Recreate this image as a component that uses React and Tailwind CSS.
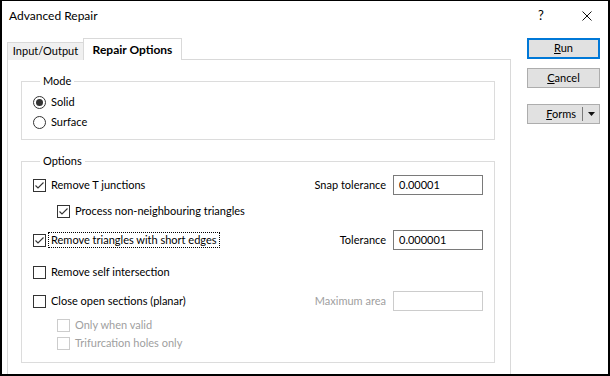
import React from 'react';

const Check = ({ checked, disabled }) => (
    <span
        className={`flex h-[13px] w-[13px] shrink-0 items-center justify-center border bg-white ${
            disabled ? 'border-[#cccccc]' : 'border-[#333333]'
        }`}
    >
        {checked && (
            <svg width="11" height="11" viewBox="0 0 11 11">
                <path d="M1.5 5.5 L4 8 L9.5 2.5" fill="none" stroke="#333333" strokeWidth="1.1" />
            </svg>
        )}
    </span>
);

const Radio = ({ checked, label }) => (
    <div className="flex h-[20px] items-center">
        <span className="flex h-[13px] w-[13px] shrink-0 items-center justify-center rounded-full border border-[#333333] bg-white">
            {checked && <span className="h-[7px] w-[7px] rounded-full bg-[#333333]" />}
        </span>
        <span className="ml-[2px] border border-transparent px-[2px] leading-[14px]">{label}</span>
    </div>
);

const CheckRow = ({ checked, disabled, focused, label, className = '' }) => (
    <div className={`flex items-center ${className}`}>
        <Check checked={checked} disabled={disabled} />
        <span
            className={`ml-[2px] border px-[2px] leading-[14px] ${
                focused ? 'border-dotted border-black' : 'border-transparent'
            } ${disabled ? 'text-[#a0a0a0]' : ''}`}
        >
            {label}
        </span>
    </div>
);

const Field = ({ label, value, disabled }) => (
    <div className="flex items-center">
        <span className={`mr-[7px] ${disabled ? 'text-[#a0a0a0]' : ''}`}>{label}</span>
        <div
            className={`flex h-[20px] w-[90px] items-center border pl-[5px] ${
                disabled ? 'border-[#cccccc]' : 'border-[#7a7a7a]'
            }`}
        >
            {value}
        </div>
    </div>
);

const Group = ({ title, className = '', children }) => (
    <div className={`flex flex-col border border-[#dcdcdc] ${className}`}>
        <span className="-mt-[9px] ml-[7px] w-fit bg-white px-[3px] leading-[16px]">{title}</span>
        {children}
    </div>
);

const Button = ({ children, primary, className = '' }) => (
    <div
        className={`flex w-[73px] items-center justify-center bg-[#e1e1e1] ${
            primary ? 'border-2 border-[#0078d7]' : 'border border-[#adadad]'
        } ${className}`}
    >
        {children}
    </div>
);

export default function App() {
    return (
        <div
            className="flex h-[376px] w-[610px] flex-col overflow-hidden border-t border-r-2 border-b-2 border-l-2 border-black bg-white text-[11px] text-black"
            style={{ fontFamily: 'Lato, "Liberation Sans", sans-serif' }}
        >
            {/* title bar */}
            <div className="flex h-[30px] shrink-0 items-center pl-[7px] text-[12px]">
                <span>Advanced Repair</span>
                <div className="flex-1" />
                <span className="w-[14px] text-center text-[13px]">?</span>
                <svg className="ml-[34px] mr-[16px]" width="10" height="10" viewBox="0 0 10 10">
                    <path d="M0.5 0.5 L9.5 9.5 M9.5 0.5 L0.5 9.5" stroke="#111" strokeWidth="1" />
                </svg>
            </div>

            <div className="mt-[7px] flex flex-1">
                {/* tabs + page */}
                <div className="ml-[5px] flex w-[504px] flex-col">
                    <div className="relative z-10 -mb-px flex h-[22px] items-end">
                        <div className="flex h-[18px] w-[76px] items-center justify-center border-t border-l border-[#d9d9d9] bg-[#f0f0f0]">
                            Input/Output
                        </div>
                        <div className="flex h-[22px] w-[99px] items-center justify-center border-t border-r border-l border-[#d9d9d9] bg-white text-[12px] font-bold">
                            Repair Options
                        </div>
                    </div>
                    <div className="flex flex-1 flex-col border-t border-r border-l border-[#d9d9d9] pt-[21px] pr-[15px] pl-[13px]">
                        <Group title="Mode" className="pl-[11px] pb-[7px]">
                            <div className="mt-[3px]">
                                <Radio checked label="Solid" />
                                <Radio label="Surface" />
                            </div>
                        </Group>

                        <Group title="Options" className="mt-[21px] pr-[11px] pb-[10px] pl-[11px]">
                            <div className="mt-[6px] flex h-[20px] items-center justify-between">
                                <CheckRow checked label="Remove T junctions" />
                                <Field label="Snap tolerance" value="0.00001" />
                            </div>
                            <CheckRow checked label="Process non-neighbouring triangles" className="mt-[6px] ml-[24px] h-[20px]" />
                            <div className="mt-[9px] flex h-[20px] items-center justify-between">
                                <CheckRow checked focused label="Remove triangles with short edges" />
                                <Field label="Tolerance" value="0.000001" />
                            </div>
                            <CheckRow label="Remove self intersection" className="mt-[12px] h-[20px]" />
                            <div className="mt-[9px] flex h-[20px] items-center justify-between">
                                <CheckRow label="Close open sections (planar)" />
                                <Field label="Maximum area" value="" disabled />
                            </div>
                            <CheckRow disabled label="Only when valid" className="mt-[5px] ml-[24px] h-[18px]" />
                            <CheckRow disabled label="Trifurcation holes only" className="ml-[24px] h-[18px]" />
                        </Group>
                    </div>
                </div>

                {/* buttons */}
                <div className="ml-[16px] flex flex-col">
                    <Button primary className="h-[21px]">
                        <span><span className="underline">R</span>un</span>
                    </Button>
                    <Button className="mt-[9px] h-[20px]">
                        <span><span className="underline">C</span>ancel</span>
                    </Button>
                    <div className="mt-[16px] flex h-[20px] w-[73px] items-center border border-[#adadad] bg-[#e1e1e1]">
                        <span className="flex flex-1 justify-end pr-[6px]">
                            <span><span className="underline">F</span>orms</span>
                        </span>
                        <span className="h-[14px] w-px bg-[#7a7a7a]" />
                        <span className="flex w-[16px] justify-center">
                            <svg width="7" height="4" viewBox="0 0 7 4">
                                <path d="M0 0 L7 0 L3.5 4 Z" fill="#111" />
                            </svg>
                        </span>
                    </div>
                </div>
            </div>
        </div>
    );
}
